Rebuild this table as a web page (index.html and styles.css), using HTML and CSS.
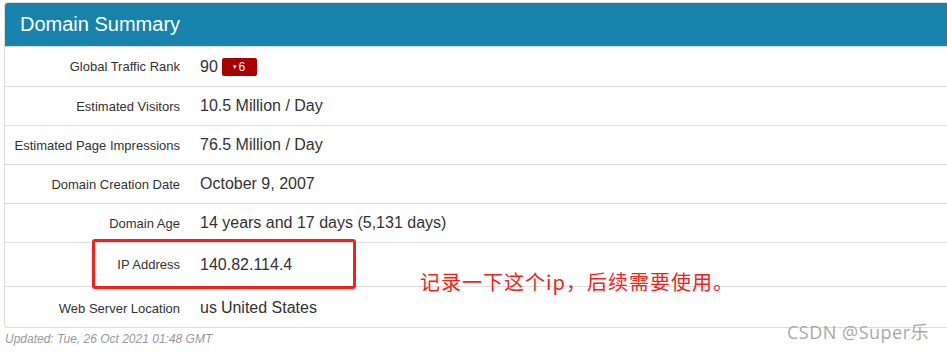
FILE: index.html
```html
<!DOCTYPE html>
<html>
<head>
<meta charset="utf-8">
<link rel="stylesheet" href="styles.css">
</head>
<body>
<div class="page">
  <div class="panel">
    <div class="panel-head">Domain Summary</div>
    <div class="row r1"><div class="label">Global Traffic Rank</div><div class="value">90 <span class="badge"><span class="caret">&#9662;</span>6</span></div></div>
    <div class="row"><div class="label">Estimated Visitors</div><div class="value">10.5 Million / Day</div></div>
    <div class="row"><div class="label">Estimated Page Impressions</div><div class="value">76.5 Million / Day</div></div>
    <div class="row"><div class="label">Domain Creation Date</div><div class="value">October 9, 2007</div></div>
    <div class="row"><div class="label">Domain Age</div><div class="value">14 years and 17 days (5,131 days)</div></div>
    <div class="row r-ip"><div class="label">IP Address</div><div class="value">140.82.114.4</div></div>
    <div class="row r-last"><div class="label">Web Server Location</div><div class="value"><span class="cc">us</span> United States</div></div>
  </div>
  <div class="updated">Updated: Tue, 26 Oct 2021 01:48 GMT</div>
  <div class="highlight"></div>
  <div class="note">记录一下这个ip，后续需要使用。</div>
  <div class="watermark">CSDN @Super乐</div>
</div>
</body>
</html>
```

FILE: styles.css
```css
html, body {
  margin: 0;
  padding: 0;
  background: #fff;
  overflow: hidden;
}
.page {
  position: relative;
  width: 947px;
  height: 352px;
  padding: 2px 0 0 4px;
  box-sizing: border-box;
  font-family: "Liberation Sans", Arial, sans-serif;
  color: #333;
}
.panel {
  width: 960px;
  border: 1px solid #ddd;
  border-right: none;
  border-radius: 4px 0 0 4px;
  overflow: hidden;
}
.panel-head {
  height: 43px;
  background: #1782ab;
  color: #fff;
  font-size: 20px;
  line-height: 43px;
  padding-left: 15px;
}
.row {
  display: flex;
  align-items: center;
  height: 38px;
  border-top: 1px solid #ddd;
}
.row.r1 { height: 39px; }
.row.r-ip { height: 43px; }
.row.r-last { height: 41px; padding-top: 2px; box-sizing: border-box; }
.label {
  width: 175px;
  text-align: right;
  font-size: 13px;
  color: #333;
}
.value {
  margin-left: 20px;
  font-size: 16px;
  color: #333;
  display: flex;
  align-items: center;
}
.badge {
  display: inline-flex;
  align-items: center;
  justify-content: center;
  margin-left: 4px;
  width: 35px;
  height: 18px;
  box-sizing: border-box;
  background: #a80000;
  color: #fff;
  font-size: 12px;
  border-radius: 2px;
}
.caret {
  font-size: 7px;
  margin-right: 1px;
}
.cc {
  margin-right: 4px;
}
.updated {
  margin-top: 4px;
  margin-left: 1px;
  font-size: 12px;
  font-style: italic;
  color: #999;
}
.highlight {
  position: absolute;
  left: 92px;
  top: 239px;
  width: 258px;
  height: 44px;
  border: 3px solid #f5221c;
  border-radius: 3px;
}
.note {
  position: absolute;
  left: 420px;
  top: 268px;
  font-family: "Noto Sans CJK SC", sans-serif;
  font-size: 20px;
  color: #f5221c;
  line-height: 28px;
  letter-spacing: 1px;
}
.watermark {
  position: absolute;
  left: 787px;
  top: 318px;
  font-family: "Open Sans", "Noto Sans CJK SC", sans-serif;
  font-size: 18px;
  letter-spacing: 0.5px;
  color: #a9a9a9;
}
```
